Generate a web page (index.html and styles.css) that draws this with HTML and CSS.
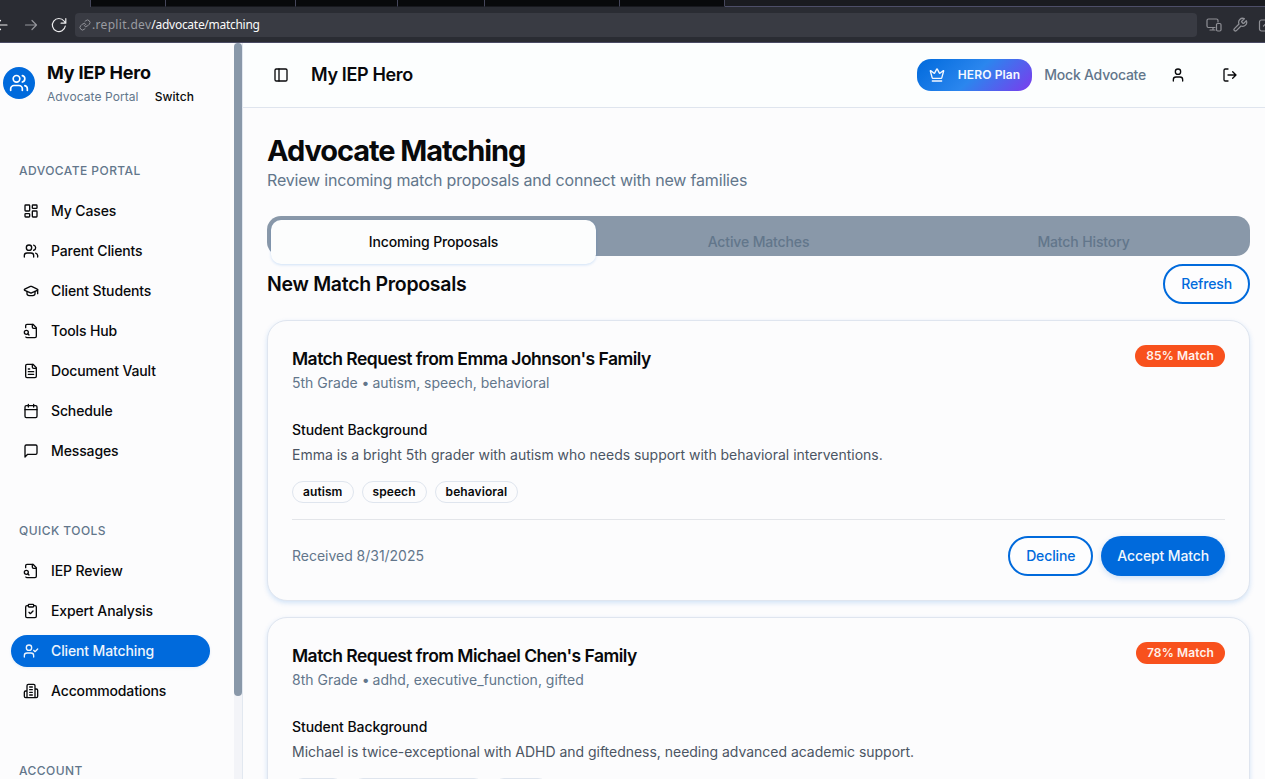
FILE: index.html
```html
<!DOCTYPE html>
<html lang="en">
<head>
<meta charset="utf-8">
<title>My IEP Hero</title>
<link rel="stylesheet" href="styles.css">
</head>
<body>
<svg class="sprite" aria-hidden="true">
  <symbol id="group" viewBox="0 0 24 24"><path d="M16 21v-2a4 4 0 0 0-4-4H6a4 4 0 0 0-4 4v2"/><circle cx="9" cy="7" r="4"/><path d="M22 21v-2a4 4 0 0 0-3-3.870M16 3.130a4 4 0 0 1 0 7.750"/></symbol>
  <symbol id="dash" viewBox="0 0 24 24"><rect x="3" y="3" width="7" height="9" rx="1"/><rect x="14" y="3" width="7" height="5" rx="1"/><rect x="14" y="12" width="7" height="9" rx="1"/><rect x="3" y="16" width="7" height="5" rx="1"/></symbol>
  <symbol id="cap" viewBox="0 0 24 24"><path d="M21.420 10.922a1 1 0 0 0-.019-1.838L12.830 5.180a2 2 0 0 0-1.660 0L2.600 9.080a1 1 0 0 0 0 1.832l8.570 3.908a2 2 0 0 0 1.660 0z"/><path d="M22 10v6M6 12.500V16a6 3 0 0 0 12 0v-3.500"/></symbol>
  <symbol id="filesearch" viewBox="0 0 24 24"><path d="M14 2v4a2 2 0 0 0 2 2h4"/><path d="M4.268 21a2 2 0 0 0 1.727 1H18a2 2 0 0 0 2-2V7l-5-5H6a2 2 0 0 0-2 2v3"/><path d="m9 18-1.500-1.500"/><circle cx="5" cy="14" r="3"/></symbol>
  <symbol id="file" viewBox="0 0 24 24"><path d="M15 2H6a2 2 0 0 0-2 2v16a2 2 0 0 0 2 2h12a2 2 0 0 0 2-2V7Z"/><path d="M14 2v4a2 2 0 0 0 2 2h4M10 9H8M16 13H8M16 17H8"/></symbol>
  <symbol id="calendar" viewBox="0 0 24 24"><path d="M8 2v4M16 2v4M3 10h18"/><rect x="3" y="4" width="18" height="18" rx="2"/></symbol>
  <symbol id="message" viewBox="0 0 24 24"><path d="M21 15a2 2 0 0 1-2 2H7l-4 4V5a2 2 0 0 1 2-2h14a2 2 0 0 1 2 2z"/></symbol>
  <symbol id="clipboard" viewBox="0 0 24 24"><rect x="8" y="2" width="8" height="4" rx="1"/><path d="M16 4h2a2 2 0 0 1 2 2v14a2 2 0 0 1-2 2H6a2 2 0 0 1-2-2V6a2 2 0 0 1 2-2h2M9 14l2 2 4-4"/></symbol>
  <symbol id="usercheck" viewBox="0 0 24 24"><path d="m16 11 2 2 4-4M16 21v-2a4 4 0 0 0-4-4H6a4 4 0 0 0-4 4v2"/><circle cx="9" cy="7" r="4"/></symbol>
  <symbol id="building" viewBox="0 0 24 24"><path d="M6 22V4a2 2 0 0 1 2-2h8a2 2 0 0 1 2 2v18ZM6 12H4a2 2 0 0 0-2 2v6a2 2 0 0 0 2 2h2M18 9h2a2 2 0 0 1 2 2v9a2 2 0 0 1-2 2h-2M10 6h4M10 10h4M10 14h4M10 18h4"/></symbol>
  <symbol id="panel" viewBox="0 0 24 24"><rect x="3" y="3" width="18" height="18" rx="2"/><path d="M9 3v18"/></symbol>
  <symbol id="crown" viewBox="0 0 24 24"><path d="M11.562 3.266a.5.5 0 0 1 .876 0L15.390 8.870a1 1 0 0 0 1.516.294L21.183 5.500a.5.5 0 0 1 .798.519l-2.834 10.246a1 1 0 0 1-.956.734H5.810a1 1 0 0 1-.957-.734L2.020 6.020a.5.5 0 0 1 .798-.519l4.276 3.664a1 1 0 0 0 1.516-.294zM5 21h14"/></symbol>
  <symbol id="user" viewBox="0 0 24 24"><path d="M19 21v-2a4 4 0 0 0-4-4H9a4 4 0 0 0-4 4v2"/><circle cx="12" cy="7" r="4"/></symbol>
  <symbol id="logout" viewBox="0 0 24 24"><path d="M9 21H5a2 2 0 0 1-2-2V5a2 2 0 0 1 2-2h4M16 17l5-5-5-5M21 12H9"/></symbol>
  <symbol id="back" viewBox="0 0 16 16"><path d="M14 8H3M7.500 3.500 3 8l4.500 4.500"/></symbol>
  <symbol id="forward" viewBox="0 0 16 16"><path d="M2.500 8h11M9 3.500 13.500 8 9 12.500"/></symbol>
  <symbol id="reload" viewBox="0 0 16 16"><path d="M14.300 9A6.500 6.500 0 1 1 13 4l1.500 2M14.800 1.500v4.700h-4.700"/></symbol>
  <symbol id="link" viewBox="0 0 24 24"><path d="M10 13a5 5 0 0 0 7.540.540l3-3a5 5 0 0 0-7.070-7.070l-1.720 1.710"/><path d="M14 11a5 5 0 0 0-7.540-.540l-3 3a5 5 0 0 0 7.070 7.070l1.710-1.710"/></symbol>
  <symbol id="devices" viewBox="0 0 16 16"><path d="M9 10.500H2.500a1.500 1.500 0 0 1-1.500-1.500V3.500A1.500 1.500 0 0 1 2.500 2h8A1.500 1.500 0 0 1 12 3.500V5M4 13h5M7 10.500V13"/><rect x="10.500" y="6.500" width="4.500" height="7.500" rx="1.200"/></symbol>
  <symbol id="wrench" viewBox="0 0 24 24"><path d="M14.700 6.300a1 1 0 0 0 0 1.400l1.600 1.600a1 1 0 0 0 1.400 0l3.770-3.770a6 6 0 0 1-7.940 7.940l-6.910 6.910a2.120 2.120 0 0 1-3-3l6.910-6.910a6 6 0 0 1 7.940-7.940l-3.760 3.760z"/></symbol>
  <symbol id="box" viewBox="0 0 16 16"><rect x="1.500" y="3" width="13" height="11" rx="2"/><path d="M5.500 9l3-3 3 3"/></symbol>
</svg>

<div class="browser">
  <div class="tabstrip">
    <span class="tab tab-current"></span><span class="tab tab-a"></span><span class="tab tab-b"></span><span class="tab tab-c"></span><span class="tab tab-d"></span><span class="tab tab-e"></span><span class="tab tab-f"></span><span class="tab-rest"></span>
  </div>
  <div class="toolbar">
    <svg class="tool back"><use href="#back"/></svg>
    <svg class="tool forward"><use href="#forward"/></svg>
    <svg class="tool reload"><use href="#reload"/></svg>
    <div class="address"><svg class="link"><use href="#link"/></svg><span class="host">.replit.dev</span><span class="path">/advocate/matching</span></div>
    <svg class="tool dim"><use href="#devices"/></svg>
    <svg class="tool dim wrench"><use href="#wrench"/></svg>
    <svg class="tool dim box"><use href="#box"/></svg>
  </div>
</div>

<div class="app">
  <aside class="sidebar">
    <div class="sidebar-body">
      <div class="brand">
        <span class="brand-logo"><svg class="icon-lg"><use href="#group"/></svg></span>
        <div>
          <div class="brand-name">My IEP Hero</div>
          <div class="brand-sub"><span>Advocate Portal</span><a class="switch">Switch</a></div>
        </div>
      </div>
      <nav class="group">
        <h3 class="group-label">ADVOCATE PORTAL</h3>
        <a class="item"><svg class="icon"><use href="#dash"/></svg>My Cases</a>
        <a class="item"><svg class="icon"><use href="#group"/></svg>Parent Clients</a>
        <a class="item"><svg class="icon"><use href="#cap"/></svg>Client Students</a>
        <a class="item"><svg class="icon"><use href="#filesearch"/></svg>Tools Hub</a>
        <a class="item"><svg class="icon"><use href="#file"/></svg>Document Vault</a>
        <a class="item"><svg class="icon"><use href="#calendar"/></svg>Schedule</a>
        <a class="item"><svg class="icon"><use href="#message"/></svg>Messages</a>
      </nav>
      <nav class="group">
        <h3 class="group-label">QUICK TOOLS</h3>
        <a class="item"><svg class="icon"><use href="#filesearch"/></svg>IEP Review</a>
        <a class="item"><svg class="icon"><use href="#clipboard"/></svg>Expert Analysis</a>
        <a class="item active"><svg class="icon"><use href="#usercheck"/></svg>Client Matching</a>
        <a class="item"><svg class="icon"><use href="#building"/></svg>Accommodations</a>
      </nav>
      <nav class="group">
        <h3 class="group-label">ACCOUNT</h3>
      </nav>
    </div>
    <div class="scrollbar"><div class="thumb"></div></div>
  </aside>

  <div class="main">
    <header class="topbar">
      <svg class="icon panel"><use href="#panel"/></svg>
      <span class="topbar-title">My IEP Hero</span>
      <span class="plan"><svg class="icon"><use href="#crown"/></svg>HERO Plan</span>
      <span class="who">Mock Advocate</span>
      <svg class="icon account"><use href="#user"/></svg>
      <svg class="icon logout"><use href="#logout"/></svg>
    </header>

    <main class="content">
      <h1 class="title">Advocate Matching</h1>
      <p class="subtitle">Review incoming match proposals and connect with new families</p>
      <div class="tabs">
        <button class="trigger selected">Incoming Proposals</button>
        <button class="trigger">Active Matches</button>
        <button class="trigger">Match History</button>
      </div>
      <div class="section-head">
        <h2 class="section-title">New Match Proposals</h2>
        <button class="btn outline">Refresh</button>
      </div>

      <article class="card">
        <div class="card-head">
          <div>
            <h3 class="card-title">Match Request from Emma Johnson's Family</h3>
            <p class="card-sub">5th Grade <span class="dot">•</span> autism, speech, behavioral</p>
          </div>
          <span class="score">85% Match</span>
        </div>
        <h4 class="label">Student Background</h4>
        <p class="desc">Emma is a bright 5th grader with autism who needs support with behavioral interventions.</p>
        <div class="chips"><span class="chip">autism</span><span class="chip">speech</span><span class="chip">behavioral</span></div>
        <div class="card-foot">
          <span class="received">Received 8/31/2025</span>
          <div class="actions"><button class="btn outline">Decline</button><button class="btn solid">Accept Match</button></div>
        </div>
      </article>

      <article class="card">
        <div class="card-head">
          <div>
            <h3 class="card-title">Match Request from Michael Chen's Family</h3>
            <p class="card-sub">8th Grade <span class="dot">•</span> adhd, executive_function, gifted</p>
          </div>
          <span class="score">78% Match</span>
        </div>
        <h4 class="label">Student Background</h4>
        <p class="desc">Michael is twice-exceptional with ADHD and giftedness, needing advanced academic support.</p>
        <div class="chips"><span class="chip">adhd</span><span class="chip">executive_function</span><span class="chip">gifted</span></div>
      </article>
    </main>
  </div>
</div>
</body>
</html>
```

FILE: styles.css
```css
* { box-sizing: border-box; margin: 0; padding: 0; }

body {
  display: flex;
  flex-direction: column;
  height: 779px;
  overflow: hidden;
  background: #fcfcfd;
  color: #08090b;
  font-family: Inter, "Liberation Sans", sans-serif;
  font-size: 14px;
  line-height: 20px;
}

h1, h2, h3, h4, button { font: inherit; letter-spacing: inherit; }
button { border: 0; background: none; color: inherit; }
svg { fill: none; stroke: currentColor; stroke-linecap: round; stroke-linejoin: round; flex: none; }
.sprite { display: none; }
.icon { width: 16px; height: 16px; stroke-width: 2; }
.icon-lg { width: 20px; height: 20px; stroke-width: 2; }

/* Browser chrome */
.browser { flex: none; height: 43px; background: #2a2c33; border-bottom: 1px solid #4a4b64; }
.tabstrip { display: flex; height: 7px; }
.tab { height: 7px; background: #08090b; border-right: 1px solid #45465a; border-bottom: 1px solid #17181e; }
.tab-current { width: 91px; background: #2a2c33; border-bottom: 0; }
.tab-a { width: 75px; }
.tab-b { width: 130px; }
.tab-c { width: 102px; }
.tab-d { width: 87px; }
.tab-e { width: 135px; }
.tab-f { width: 105px; }
.tab-rest { flex: 1; background: #1a1b20; border-bottom: 1px solid #4d4e68; }
.toolbar { display: flex; align-items: center; height: 35px; color: #ececee; overflow: hidden; }
.tool { width: 16px; height: 16px; stroke-width: 1.2; }
.back { margin-left: -7px; }
.forward { margin-left: 14px; color: #94959b; }
.reload { margin-left: 12px; }
.address {
  display: flex; flex: none; align-items: center;
  width: 1122px; height: 24px; margin: 0 9px 0 8px; padding-left: 4px;
  border-radius: 4px; background: #393b43;
  font: 12px/24px "Noto Sans", sans-serif;
}
.link { width: 12px; height: 12px; margin-right: 1px; stroke-width: 1.8; color: #9a9ba1; }
.host { color: #9a9ba1; letter-spacing: 0.32px; }
.path { color: #fafafa; letter-spacing: -0.28px; }
.dim { color: #8f9096; stroke-width: 1.2; }
.wrench { margin-left: 10px; stroke-width: 1.9; }
.box { margin-left: 10px; }

/* Shell */
.app { display: flex; flex: 1; min-height: 0; }
.sidebar { display: flex; flex: none; width: 243px; border-right: 1px solid #e2e8f0; overflow: hidden; }
.sidebar-body { width: 234px; overflow: hidden; }
.scrollbar { width: 8px; background: #f3f4f8; }
.thumb { height: 653px; border-radius: 4px; background: #8998a9; }

.brand { display: flex; align-items: center; gap: 12px; height: 80px; padding-left: 3px; }
.brand-logo {
  display: flex; align-items: center; justify-content: center;
  width: 32px; height: 32px; border-radius: 50%; background: #006adc; color: #fff;
}
.brand-name { font-size: 18px; font-weight: 700; line-height: 28px; letter-spacing: -0.2px; }
.brand-sub { display: flex; gap: 16px; font-size: 12px; letter-spacing: 0.08px; color: #62768b; }
.switch { color: #08090b; font-weight: 500; }

.group { display: flex; flex-direction: column; gap: 8px; padding: 48px 24px 0 11px; }
.brand + .group { padding-top: 32px; }
.group-label { height: 32px; padding-left: 8px; font-size: 12px; font-weight: 500; line-height: 32px; letter-spacing: 0.45px; color: #62768b; }
.item { display: flex; align-items: center; gap: 12px; height: 32px; padding-left: 12px; border-radius: 16px; font-weight: 500; letter-spacing: -0.13px; }
.active { background: #006adc; color: #eef5fd; box-shadow: 0 1px 3px rgba(0, 106, 220, 0.1); }

.main { flex: 1; min-width: 0; }
.topbar { display: flex; align-items: center; height: 65px; padding: 0 27px 0 30px; border-bottom: 1px solid #dfe5ee; background: #fcfefe; }
.topbar-title { margin: 0 auto 0 22px; font-size: 18px; font-weight: 600; line-height: 28px; letter-spacing: -0.35px; }
.plan {
  display: flex; align-items: center; gap: 12.5px;
  width: 115px; height: 32px; padding-left: 12px; border-radius: 14px;
  background: linear-gradient(135deg, #006adc 0%, #2b86ee 50%, #7c3aed 100%);
  color: #f4f8ff; font-size: 12px; font-weight: 600; letter-spacing: 0.12px;
}
.who { margin-left: 12px; font-weight: 500; letter-spacing: -0.23px; color: #62768b; }
.account { margin-left: 24px; }
.logout { margin-left: 36px; }

/* Page */
.content { padding: 24px 15px 0 24px; }
.title { font-size: 29px; font-weight: 700; line-height: 37px; height: 36px; letter-spacing: -1.07px; }
.subtitle { font-size: 16px; line-height: 24px; letter-spacing: -0.18px; color: #62768b; }
.tabs { display: grid; grid-template-columns: repeat(3, 1fr); height: 40px; margin-top: 24px; padding: 4px; border-radius: 14px; background: #8998a9; }
.trigger { height: 44px; border-radius: 10px; font-weight: 500; letter-spacing: -0.13px; color: #62768b; }
.selected { background: #fcfdfd; color: #08090b; box-shadow: 0 1px 3px rgba(0, 106, 220, 0.18); }
.section-head { display: flex; align-items: center; justify-content: space-between; margin-top: 8px; }
.section-title { font-size: 19.5px; font-weight: 600; line-height: 28px; letter-spacing: -0.29px; }
.btn { height: 40px; padding: 0 16px; border-radius: 20px; font-weight: 500; letter-spacing: -0.13px; }
.outline { border: 2px solid #006adc; color: #006adc; background: #fdfdfe; }
.solid { background: #006adc; color: #f2f7fd; box-shadow: 0 2px 6px rgba(0, 106, 220, 0.2); }

.card { height: 281px; margin-top: 16px; padding: 24px; border: 1px solid #dfe5ef; border-radius: 20px; background: #fcfcfd; box-shadow: 0 2px 5px rgba(0, 106, 220, 0.17); }
.card-head { display: flex; justify-content: space-between; align-items: flex-start; }
.card-title { font-size: 17.5px; font-weight: 600; line-height: 28px; letter-spacing: -0.53px; }
.card-sub { color: #62768b; }
.dot { letter-spacing: -1px; }
.score { height: 22px; padding: 0 11px; border-radius: 11px; background: #f8511d; color: #fff2ec; font-size: 12px; font-weight: 600; line-height: 22px; letter-spacing: 0.12px; }
.label { margin-top: 27px; font-weight: 500; letter-spacing: -0.07px; }
.desc { margin-top: 5px; letter-spacing: -0.02px; color: #4b5563; }
.chips { display: flex; gap: 8px; margin-top: 16px; }
.chip { height: 22px; padding: 0 10px; border: 1px solid #dfe5ee; border-radius: 11px; font-size: 12px; font-weight: 600; line-height: 20px; letter-spacing: 0.08px; }
.card-foot { display: flex; align-items: center; justify-content: space-between; margin-top: 16px; padding-top: 16px; border-top: 1px solid #e3e5e9; }
.received { letter-spacing: -0.02px; color: #62768b; }
.actions { display: flex; gap: 8px; }
```
